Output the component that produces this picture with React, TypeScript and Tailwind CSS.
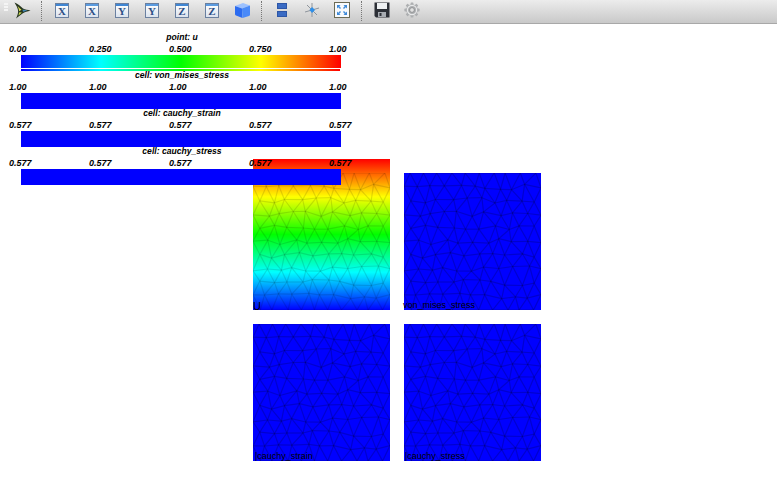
import React from 'react';

const SANS = "font-['Liberation_Sans',Arial,sans-serif]";

const jitter = (i: number, j: number, k: number) => {
  const v = Math.sin(i * 12.9898 + j * 78.233 + k * 37.719) * 43758.5453;
  return (v - Math.floor(v)) * 2 - 1;
};

// staggered rows, nudged a bit so that it reads like an unstructured mesh
const buildMesh = () => {
  const size = 137;
  const rows = 10;
  const step = size / rows;
  const nodes: [number, number][][] = [];
  for (let r = 0; r <= rows; r++) {
    const row: [number, number][] = [];
    const odd = r % 2 === 1;
    const count = odd ? 11 : 10;
    for (let c = 0; c < count; c++) {
      let x = odd ? c * step : (c + 0.5) * step;
      let y = r * step;
      const inner = r > 0 && r < rows && c > 0 && c < count - 1;
      if (inner) {
        x += jitter(r, c, 1) * 3;
        y += jitter(r, c, 2) * 3;
      } else if (r === 0 || r === rows) {
        x += jitter(r, c, 3) * 2;
      } else {
        y += jitter(r, c, 4) * 2;
      }
      row.push([x, y]);
    }
    nodes.push(row);
  }
  const segs: string[] = [];
  const line = (a: [number, number], b: [number, number]) =>
    segs.push(`M${a[0].toFixed(1)} ${a[1].toFixed(1)}L${b[0].toFixed(1)} ${b[1].toFixed(1)}`);
  nodes.forEach((row, r) => {
    row.forEach((n, c) => {
      if (c + 1 < row.length) line(n, row[c + 1]);
      const next = nodes[r + 1];
      if (!next) return;
      if (r % 2 === 1) {
        if (next[c - 1]) line(n, next[c - 1]);
        if (next[c]) line(n, next[c]);
      } else {
        line(n, next[c]);
        line(n, next[c + 1]);
      }
    });
  });
  return segs;
};

const meshSegs = buildMesh();

// one path per edge, the alpha piles up where edges meet and darkens the nodes
const Mesh = ({ className }: { className: string }) => (
  <svg viewBox="0 0 137 137" className={className}>
    {meshSegs.map((d, i) => (
      <path key={i} d={d} fill="none" stroke="currentColor" strokeWidth="1.2" />
    ))}
  </svg>
);

const Grip = () => (
  <div className="w-[7px] h-full relative shrink-0">
    <div className="absolute left-[4px] top-[3px] grid grid-cols-2 gap-[1px]">
      {[0, 1, 2, 3, 4, 5].map((i) => (
        <div key={i} className="w-[2px] h-[2px] bg-[#f4f4f4]" />
      ))}
    </div>
  </div>
);

const Sep = () => (
  <div className="w-[10px] h-full flex justify-start pl-[4px] shrink-0 py-[1px]">
    <div className="h-[20px] border-l border-dotted border-[#777777]" />
  </div>
);

const Slot = ({ children }: { children: React.ReactNode }) => (
  <div className="w-[30px] h-full shrink-0 flex items-center justify-center pb-[3px]">{children}</div>
);

const AxisIcon = ({ letter, light }: { letter: string; light?: boolean }) => (
  <div className="w-[14px] h-[15px] flex flex-col border border-[#6a80a0] bg-gradient-to-b from-white to-[#dbe3ee]">
    <div className={`h-[2px] shrink-0 ${light ? 'bg-[#5a9be0]' : 'bg-[#3f86d4]'}`} />
    <div className="h-[11px] flex items-center justify-center font-['Liberation_Serif',serif] font-bold text-[11px] leading-[11px] text-[#2c4f86]">
      {letter}
    </div>
  </div>
);

const Logo = () => (
  <svg width="17" height="17" viewBox="0 0 17 17">
    <path d="M0.5 0.5 C4 1.5 7 5 9 6.5 C11 7.5 14 8 16.5 8.5 C13.5 9.5 10.5 10 8.5 11.5 C6.5 13 4 15 2 16.5 C3.5 13.5 4.5 10.5 4 8 C3.5 5.5 2 3 0.5 0.5 Z" fill="#27361f" />
    <path d="M3.5 4 C5 5.5 6.5 7 7.5 7.8 L5.2 9.2 C5 7.5 4.4 5.5 3.5 4 Z" fill="#dfe05a" />
    <path d="M8.5 7.5 C10 8 12 8.3 13.5 8.5 C12 9 10.5 9.4 9 9.8 Z" fill="#3f86b8" />
    <path d="M5.3 10.2 L7.8 10.6 C6.5 11.8 5.5 12.8 4.4 13.6 Z" fill="#c9d94c" />
  </svg>
);

const Cube = () => (
  <svg width="17" height="17" viewBox="0 0 17 17">
    <path d="M1 4 L9 1 L16 3.5 L8 6.5 Z" fill="#9cc1ff" />
    <path d="M1 4 L8 6.5 L8.5 16 L2 13.5 Q1 13 1 12 Z" fill="#2c6cf0" />
    <path d="M8 6.5 L16 3.5 L16 12.5 Q16 13.5 15 14 L8.5 16 Z" fill="#4a8af8" />
  </svg>
);

const Panes = () => (
  <div className="w-[10px] flex flex-col gap-[2px]">
    <div className="h-[6px] bg-[#3a6bc4] border border-[#2d56a6]" />
    <div className="h-[6px] bg-[#3a6bc4] border border-[#2d56a6]" />
  </div>
);

const Axes = () => (
  <svg width="16" height="16" viewBox="0 0 16 16">
    <path d="M8 1 L8 15 M1 10 L15 6 M3 3 L13 13" stroke="#8f959c" strokeWidth="1" fill="none" />
    <path d="M8 5 L11 8 L8 11 L5.5 8 Z" fill="#2f8fe8" />
  </svg>
);

const Fit = () => (
  <svg width="16" height="16" viewBox="0 0 16 16">
    <rect x="0.5" y="0.5" width="15" height="15" fill="#f8fafc" stroke="#6b6a55" />
    <path d="M3 3 L6.5 3 L5.3 4.3 L7 6 L6 7 L4.3 5.3 L3 6.5 Z" fill="#3f8ad8" />
    <path d="M13 3 L13 6.5 L11.7 5.3 L10 7 L9 6 L10.7 4.3 L9.5 3 Z" fill="#3f8ad8" />
    <path d="M3 13 L3 9.5 L4.3 10.7 L6 9 L7 10 L5.3 11.7 L6.5 13 Z" fill="#3f8ad8" />
    <path d="M13 13 L9.5 13 L10.7 11.7 L9 10 L10 9 L11.7 10.7 L13 9.5 Z" fill="#3f8ad8" />
  </svg>
);

const Save = () => (
  <svg width="16" height="16" viewBox="0 0 16 16">
    <path d="M0.5 0.5 H15.5 V15.5 H2 L0.5 14 Z" fill="#2c2f36" />
    <rect x="3" y="1" width="10" height="6" fill="#eef0f2" />
    <rect x="4" y="10" width="8" height="5" fill="#a8acb2" />
    <rect x="5.5" y="11" width="2" height="3" fill="#2c2f36" />
  </svg>
);

const Gear = () => (
  <svg width="16" height="16" viewBox="0 0 16 16">
    <g fill="#adafb1">
      <circle cx="8" cy="8" r="5.8" />
      {[0, 45, 90, 135, 180, 225, 270, 315].map((a) => (
        <rect key={a} x="6.6" y="0.4" width="2.8" height="3.2" rx="0.6" transform={`rotate(${a} 8 8)`} />
      ))}
    </g>
    <circle cx="8" cy="8" r="4.6" fill="none" stroke="#e8e9ea" strokeWidth="1.2" />
    <circle cx="8" cy="8" r="2.4" fill="#e2e2e2" stroke="#8f9193" strokeWidth="1" />
  </svg>
);

const Toolbar = () => (
  <div className="h-[24px] shrink-0 flex bg-gradient-to-b from-[#ececec] to-[#c9c9c9] border-b border-[#a8a8a8]">
    <Grip />
    <Slot><Logo /></Slot>
    <Sep />
    <Slot><AxisIcon letter="X" /></Slot>
    <Slot><AxisIcon letter="X" light /></Slot>
    <Slot><AxisIcon letter="Y" /></Slot>
    <Slot><AxisIcon letter="Y" light /></Slot>
    <Slot><AxisIcon letter="Z" /></Slot>
    <Slot><AxisIcon letter="Z" light /></Slot>
    <Slot><Cube /></Slot>
    <Sep />
    <Slot><Panes /></Slot>
    <Slot><Axes /></Slot>
    <Slot><Fit /></Slot>
    <Sep />
    <Slot><Save /></Slot>
    <Slot><Gear /></Slot>
  </div>
);

const JET = 'bg-[linear-gradient(to_right,#0000ff,#00ffff,#00ff00,#ffff00,#ff0000)]';

interface BarProps {
  title: string;
  ticks: string[];
  fill: string;
  height: string;
}

const ScalarBar = ({ title, ticks, fill, height }: BarProps) => (
  <div className="flex flex-col">
    <div className="h-[10px] w-[322px] ml-[21px] text-center text-[8.6px] leading-[8px] font-bold italic text-black whitespace-nowrap">
      {title}
    </div>
    <div className="h-[12px] grid grid-cols-[repeat(5,80px)] pl-[9px] text-[9px] leading-[12px] font-bold italic text-black">
      {ticks.map((t, i) => (
        <span key={i}>{t}</span>
      ))}
    </div>
    <div className={`ml-[21px] w-[320px] ${height} ${fill}`} />
  </div>
);

interface PlotProps {
  label: string;
  mesh: string;
  className: string;
  labelClass: string;
}

const Plot = ({ label, mesh, className, labelClass }: PlotProps) => (
  <div className={`relative w-[137px] flex flex-col justify-end ${className}`}>
    <Mesh className={`w-[137px] h-[137px] block blur-[0.4px] ${mesh}`} />
    <span className={`absolute leading-[11px] text-black whitespace-nowrap ${labelClass}`}>
      {label}
    </span>
  </div>
);

const App = () => (
  <div className={`w-[777px] h-[500px] bg-white flex flex-col overflow-hidden ${SANS}`}>
    <Toolbar />
    <div className="relative flex-1">
      <div className="grid grid-cols-[137px_137px] grid-rows-[151px_137px] gap-[14px] pl-[253px] pt-[135px]">
        <Plot
          label="U"
          mesh="text-[#0000001e]"
          labelClass="left-0 bottom-[-2px] text-[11px]"
          className="h-[151px] bg-[linear-gradient(to_top,#0000ff,#00ffff,#00ff00,#ffff00,#ff0000)]"
        />
        <Plot
          label="von_mises_stress"
          mesh="text-[#00000030]"
          labelClass="left-[-1px] bottom-[-1px] text-[9px]"
          className="h-[137px] self-end bg-[#0000ff]"
        />
        <Plot
          label="|cauchy_strain"
          mesh="text-[#00000030]"
          labelClass="left-[2px] bottom-[-1px] text-[9px]"
          className="h-[137px] bg-[#0000ff]"
        />
        <Plot
          label="|cauchy_stress"
          mesh="text-[#00000030]"
          labelClass="left-[1px] bottom-[-1px] text-[9px]"
          className="h-[137px] bg-[#0000ff]"
        />
      </div>

      <div className="absolute left-0 top-[9px] flex flex-col">
        <ScalarBar
          title="point: u"
          ticks={['0.00', '0.250', '0.500', '0.750', '1.00']}
          fill={JET}
          height="h-[13px]"
        />
        <div className={`ml-[21px] mt-[1px] w-[319px] h-[2px] ${JET}`} />
        <ScalarBar
          title="cell: von_mises_stress"
          ticks={['1.00', '1.00', '1.00', '1.00', '1.00']}
          fill="bg-[#0000ff]"
          height="h-[16px]"
        />
        <ScalarBar
          title="cell: cauchy_strain"
          ticks={['0.577', '0.577', '0.577', '0.577', '0.577']}
          fill="bg-[#0000ff]"
          height="h-[16px]"
        />
        <ScalarBar
          title="cell: cauchy_stress"
          ticks={['0.577', '0.577', '0.577', '0.577', '0.577']}
          fill="bg-[#0000ff]"
          height="h-[16px]"
        />
      </div>
    </div>
  </div>
);

export default App;
